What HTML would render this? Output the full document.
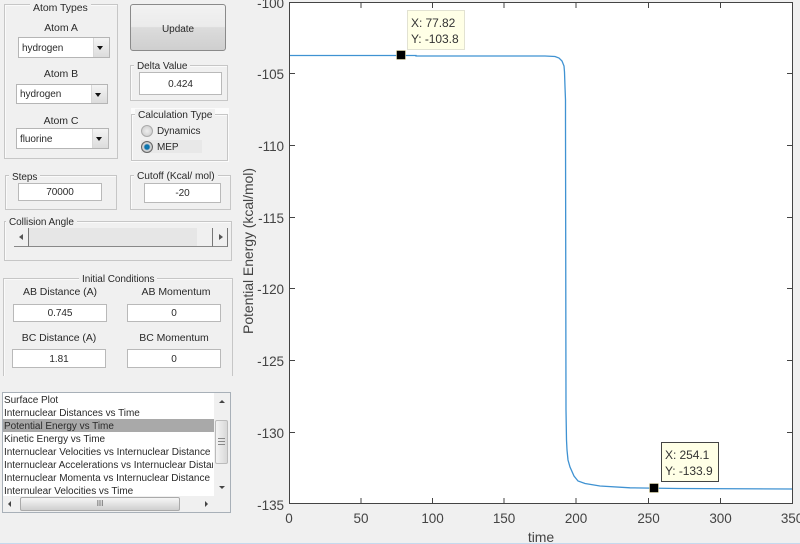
<!DOCTYPE html>
<html><head><meta charset="utf-8">
<style>
html,body{margin:0;padding:0}
body{width:800px;height:544px;background:#f0f0f0;position:relative;overflow:hidden;font-family:"Liberation Sans",sans-serif;font-size:10px;letter-spacing:-.05px;color:#2a2a2a}
#ui{position:absolute;left:0;top:0;width:800px;height:544px;filter:blur(.35px)}
#ui div{position:absolute;box-sizing:border-box}
.box{border:1px solid #c6c6c6;box-shadow:inset 1px 1px 0 #fafafa}
.lb{background:#f0f0f0;padding:0 3px;line-height:14px;height:12px;white-space:nowrap}
.c{text-align:center;line-height:13px;height:13px;white-space:nowrap;transform:translateX(-50%);font-size:10.5px}
.ed{background:#fff;border:1px solid #b9b9b9;text-align:center;white-space:nowrap}
.pop{background:#fff;border:1px solid #b5b5b5;padding-left:3px;white-space:nowrap}
.pop i{position:absolute;right:0;top:0;bottom:0;width:15px;background:linear-gradient(#f4f4f4,#dcdcdc);border-left:1px solid #d8d8d8}
.pop i:after{content:"";position:absolute;left:3px;top:8px;border:3.500px solid transparent;border-top:4px solid #111;border-bottom:0}
.it{left:4px;height:13px;line-height:13px;white-space:nowrap;width:209px;overflow:hidden;letter-spacing:-.03px}
</style></head><body>
<div id="ui">
<!-- Atom Types -->
<div class="box" style="left:4px;top:4px;width:114px;height:155px"></div>
<div class="lb" style="left:30px;top:1px;font-size:10.5px">Atom Types</div>
<div class="c" style="left:61px;top:22px">Atom A</div>
<div class="pop" style="left:18px;top:37px;width:92px;height:21px;line-height:21px">hydrogen<i></i></div>
<div class="c" style="left:61px;top:68px">Atom B</div>
<div class="pop" style="left:16px;top:84px;width:92px;height:20px;line-height:20px">hydrogen<i></i></div>
<div class="c" style="left:61px;top:115px">Atom C</div>
<div class="pop" style="left:16px;top:128px;width:93px;height:21px;line-height:22px">fluorine<i></i></div>
<!-- Update -->
<div style="left:130px;top:4px;width:96px;height:47px;border:1px solid #8a8a8a;border-radius:3px;background:linear-gradient(#f2f2f2 0,#ebebeb 48%,#dcdcdc 50%,#cfcfcf 100%);text-align:center;line-height:49px">Update</div>
<!-- Delta -->
<div class="box" style="left:130px;top:65px;width:98px;height:36px"></div>
<div class="lb" style="left:134px;top:60px">Delta Value</div>
<div class="ed" style="left:139px;top:72px;width:83px;height:23px;line-height:24px">0.424</div>
<!-- Calc type -->
<div style="left:131px;top:108px;width:98px;height:54px;background:#fbfbfb"></div>
<div class="box" style="left:131px;top:114px;width:97px;height:47px;background:#f0f0f0"></div>
<div class="lb" style="left:135px;top:109px;font-size:10.2px">Calculation Type</div>
<div style="left:141px;top:140px;width:61px;height:13px;background:#e8e8e8"></div>
<div style="left:141px;top:125px;width:12px;height:12px;border-radius:50%;border:1px solid #aaa;background:radial-gradient(#eee,#c8c8c8)"></div>
<div style="left:157px;top:125px;line-height:14px">Dynamics</div>
<div style="left:141px;top:141px;width:12px;height:12px;border-radius:50%;border:1px solid #666;background:radial-gradient(circle,#0a7fb8 0,#0a6ea8 30%,#d8d8d8 50%,#aaa 100%)"></div>
<div style="left:157px;top:141px;line-height:14px">MEP</div>
<!-- Steps -->
<div class="box" style="left:5px;top:175px;width:112px;height:35px"></div>
<div class="lb" style="left:9px;top:171px">Steps</div>
<div class="ed" style="left:18px;top:183px;width:84px;height:18px;line-height:18px">70000</div>
<!-- Cutoff -->
<div class="box" style="left:130px;top:175px;width:101px;height:35px"></div>
<div class="lb" style="left:134px;top:170px;font-size:10.2px">Cutoff (Kcal/ mol)</div>
<div class="ed" style="left:144px;top:183px;width:77px;height:20px;line-height:20px">-20</div>
<!-- Collision -->
<div class="box" style="left:4px;top:221px;width:228px;height:40px"></div>
<div class="lb" style="left:6px;top:216px">Collision Angle</div>
<div style="left:14px;top:228px;width:214px;height:19px;background:#e6e6e6;border-bottom:1px solid #888"></div>
<div style="left:14px;top:228px;width:15px;height:19px;background:#f0f0f0;border-right:1px solid #777;border-bottom:1px solid #888"></div>
<div style="left:19px;top:234px;border:3.500px solid transparent;border-right:4px solid #555;border-left:0"></div>
<div style="left:197px;top:228px;width:16px;height:19px;background:#f0f0f0;border-right:1px solid #777;border-bottom:1px solid #888"></div>
<div style="left:213px;top:228px;width:15px;height:19px;background:#f0f0f0;border-right:1px solid #777;border-bottom:1px solid #888"></div>
<div style="left:219px;top:234px;border:3.500px solid transparent;border-left:4px solid #555;border-right:0"></div>
<!-- Initial Conditions -->
<div class="box" style="left:3px;top:278px;width:230px;height:98px;border-bottom:0"></div>
<div class="lb" style="left:79px;top:273px">Initial Conditions</div>
<div class="c" style="left:60px;top:286px">AB Distance (A)</div>
<div class="c" style="left:176px;top:286px">AB Momentum</div>
<div class="ed" style="left:13px;top:304px;width:94px;height:18px;line-height:18px">0.745</div>
<div class="ed" style="left:127px;top:304px;width:94px;height:18px;line-height:18px">0</div>
<div class="c" style="left:59px;top:332px">BC Distance (A)</div>
<div class="c" style="left:174px;top:332px">BC Momentum</div>
<div class="ed" style="left:12px;top:349px;width:94px;height:19px;line-height:19px">1.81</div>
<div class="ed" style="left:127px;top:349px;width:94px;height:19px;line-height:19px">0</div>
<!-- List -->
<div style="left:2px;top:392px;width:229px;height:121px;background:#f0f0f0;border:1px solid #a8b0b8"></div>
<div style="left:3px;top:393px;width:211px;height:103px;background:#fff"></div>
<div style="left:3px;top:419px;width:211px;height:13px;background:#a9a9a9"></div>
<div class="it" style="top:394px">Surface Plot</div>
<div class="it" style="top:407px">Internuclear Distances vs Time</div>
<div class="it" style="top:420px">Potential Energy vs Time</div>
<div class="it" style="top:433px">Kinetic Energy vs Time</div>
<div class="it" style="top:446px">Internuclear Velocities vs Internuclear Distance</div>
<div class="it" style="top:459px">Internuclear Accelerations vs Internuclear Distance</div>
<div class="it" style="top:472px">Internuclear Momenta vs Internuclear Distance</div>
<div class="it" style="top:485px">Internulear Velocities vs Time</div>
<div style="left:215px;top:420px;width:13px;height:44px;border:1px solid #bbb;border-radius:2px;background:linear-gradient(90deg,#f4f4f4,#d8d8d8)"></div>
<div style="left:218px;top:438px;width:7px;height:7px;border-top:1px solid #888;border-bottom:1px solid #888"></div>
<div style="left:218px;top:441px;width:7px;height:1px;background:#888"></div>
<div style="left:219px;top:400px;border:3.500px solid transparent;border-bottom:3px solid #444;border-top:0"></div>
<div style="left:219px;top:486px;border:3.500px solid transparent;border-top:3px solid #444;border-bottom:0"></div>
<div style="left:20px;top:497px;width:160px;height:14px;border:1px solid #aaa;border-radius:2px;background:linear-gradient(#f6f6f6,#cfcfcf);text-align:center;line-height:11px;font-size:8px;color:#555">III</div>
<div style="left:8px;top:501px;border:3.500px solid transparent;border-right:3px solid #444;border-left:0"></div>
<div style="left:205px;top:501px;border:3.500px solid transparent;border-left:3px solid #444;border-right:0"></div>
<!-- Plot -->
<svg style="position:absolute;left:0;top:0" width="800" height="544" viewBox="0 0 800 544">
<rect x="289.500" y="2.500" width="503" height="501" fill="#fff" stroke="#444" stroke-width="1"/>
<g stroke="#444" stroke-width="1">
<path d="M361 3v5M432.500 3v5M504 3v5M576 3v5M648.500 3v5M720.500 3v5"/>
<path d="M361 503v-5M432.500 503v-5M504 503v-5M576 503v-5M648.500 503v-5M720.500 503v-5"/>
<path d="M290 73.500h5M290 145.500h5M290 217.500h5M290 288.500h5M290 360.500h5M290 432.500h5"/>
<path d="M792 73.500h-5M792 145.500h-5M792 217.500h-5M792 288.500h-5M792 360.500h-5M792 432.500h-5"/>
</g>
<path d="M290 55.500H416V56H545L555 56.500L559 58L562 61L564 66L564.500 72L565 87L565.500 100L565.500 120L566 410L566.500 440L567 450L568 460L570 467L574 476L578 481L585 483.500L600 486L630 487.800L678 488.500L792 489" fill="none" stroke="#3f92d2" stroke-width="1.300"/>
<g font-family="Liberation Sans, sans-serif" font-size="13.500" fill="#444" text-anchor="end">
<text x="284" y="8">-100</text><text x="284" y="79">-105</text><text x="284" y="151">-110</text><text x="284" y="223">-115</text><text x="284" y="294">-120</text><text x="284" y="366">-125</text><text x="284" y="438">-130</text><text x="284" y="510">-135</text>
</g>
<g font-family="Liberation Sans, sans-serif" font-size="13.500" fill="#444" text-anchor="middle">
<text x="289" y="523">0</text><text x="361" y="523">50</text><text x="432.500" y="523">100</text><text x="504" y="523">150</text><text x="576" y="523">200</text><text x="648.500" y="523">250</text><text x="720.500" y="523">300</text><text x="792" y="523">350</text>
<text x="541" y="542" font-size="14">time</text>
<text transform="translate(253 251) rotate(-90)" font-size="14">Potential Energy (kcal/mol)</text>
</g>
<rect x="407.500" y="10.500" width="57" height="39" fill="#ffffe6" stroke="#e2e2d2"/>
<rect x="661.500" y="442.500" width="57" height="39" fill="#ffffe6" stroke="#444"/>
<g font-family="Liberation Sans, sans-serif" font-size="12" fill="#333">
<text x="411" y="27">X: 77.82</text><text x="411" y="43">Y: -103.8</text>
<text x="665" y="459">X: 254.1</text><text x="665" y="475">Y: -133.9</text>
</g>
<rect x="396.500" y="50.500" width="9" height="9" fill="#000" stroke="#e8e0b0" stroke-width=".6"/>
<rect x="649.500" y="483.500" width="9" height="9" fill="#000" stroke="#e8e0b0" stroke-width=".6"/>
</svg>
<div style="left:0;top:543px;width:800px;height:1px;background:#c5d9ee"></div>
</div>
</body></html>
